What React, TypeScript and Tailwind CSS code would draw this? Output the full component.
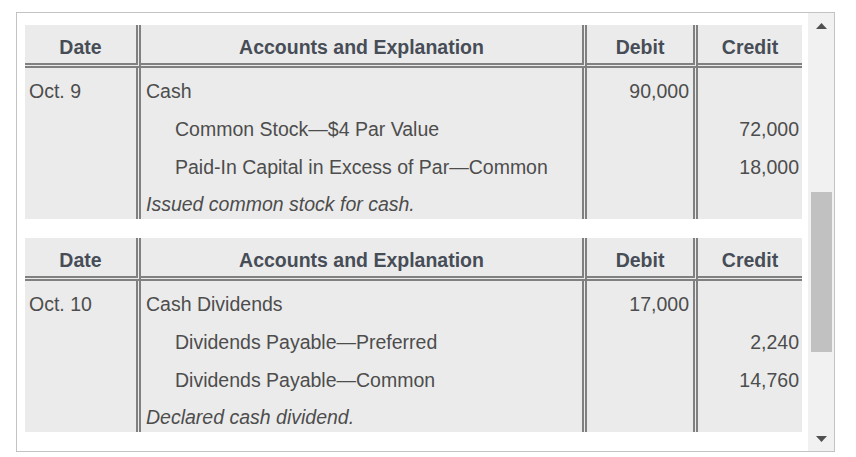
import React from 'react';

type Line = { text: string; indent?: boolean; italic?: boolean; debit?: string; credit?: string };

type Entry = { date: string; lines: Line[] };

const entries: Entry[] = [
  {
    date: 'Oct. 9',
    lines: [
      { text: 'Cash', debit: '90,000' },
      { text: 'Common Stock\u2014$4 Par Value', indent: true, credit: '72,000' },
      { text: 'Paid-In Capital in Excess of Par\u2014Common', indent: true, credit: '18,000' },
      { text: 'Issued common stock for cash.', italic: true },
    ],
  },
  {
    date: 'Oct. 10',
    lines: [
      { text: 'Cash Dividends', debit: '17,000' },
      { text: 'Dividends Payable\u2014Preferred', indent: true, credit: '2,240' },
      { text: 'Dividends Payable\u2014Common', indent: true, credit: '14,760' },
      { text: 'Declared cash dividend.', italic: true },
    ],
  },
];

const grid = 'grid grid-cols-[116px_446px_111px_104px]';
const vline = 'border-r-[5px] border-double border-[#808080]';
const head = 'border-b-[5px] border-double border-[#808080] pt-[10px] pb-[4px] text-center font-bold text-[#474d57]';

const JournalTable: React.FC<{ entry: Entry }> = ({ entry }) => (
  <div className="w-[777px] bg-[#ebebeb] text-[19.5px] leading-[24px]">
    <div className={grid}>
      <div className={`${head} ${vline}`}>Date</div>
      <div className={`${head} ${vline}`}>Accounts and Explanation</div>
      <div className={`${head} ${vline}`}>Debit</div>
      <div className={head}>Credit</div>
    </div>
    {entry.lines.map((line, i) => (
      <div key={i} className={`${grid} h-[37.75px] text-[#4d4d4d]`}>
        <div className={`${vline} pl-[4px] pt-[11px]`}>{i === 0 ? entry.date : ''}</div>
        <div
          className={`${vline} pt-[11px] ${line.indent ? 'pl-[34px]' : 'pl-[5px]'} ${line.italic ? 'italic' : ''}`}
        >
          {line.text}
        </div>
        <div className={`${vline} pr-[4px] pt-[11px] text-right`}>{line.debit}</div>
        <div className="pr-[3px] pt-[11px] text-right">{line.credit}</div>
      </div>
    ))}
  </div>
);

const Arrow: React.FC<{ down?: boolean }> = ({ down }) => (
  <div className="h-[25px] flex items-center justify-center">
    <svg width="11" height="6" viewBox="0 0 11 6">
      <polygon points={down ? '0,0 11,0 5.5,6' : '0,6 5.5,0 11,6'} fill="#505050" />
    </svg>
  </div>
);

export default function App() {
  return (
    <div className="w-[856px] h-[457px] bg-white pt-[12px] pl-[16px]" style={{ fontFamily: '"Liberation Sans", Arial, sans-serif' }}>
      <div className="w-[819px] h-[440px] border border-[#c3c3c3] flex">
        <div className="w-[791px] h-full overflow-hidden pl-[8px] pt-[12px] flex flex-col gap-[19px]">
          {entries.map(e => (
            <JournalTable key={e.date} entry={e} />
          ))}
        </div>
        <div className="w-[26px] h-full bg-[#f1f1f1] flex flex-col">
          <Arrow />
          <div className="mt-[154px] ml-[3px] w-[21px] h-[160px] bg-[#c1c1c1]" />
          <div className="flex-1" />
          <Arrow down />
        </div>
      </div>
    </div>
  );
}
